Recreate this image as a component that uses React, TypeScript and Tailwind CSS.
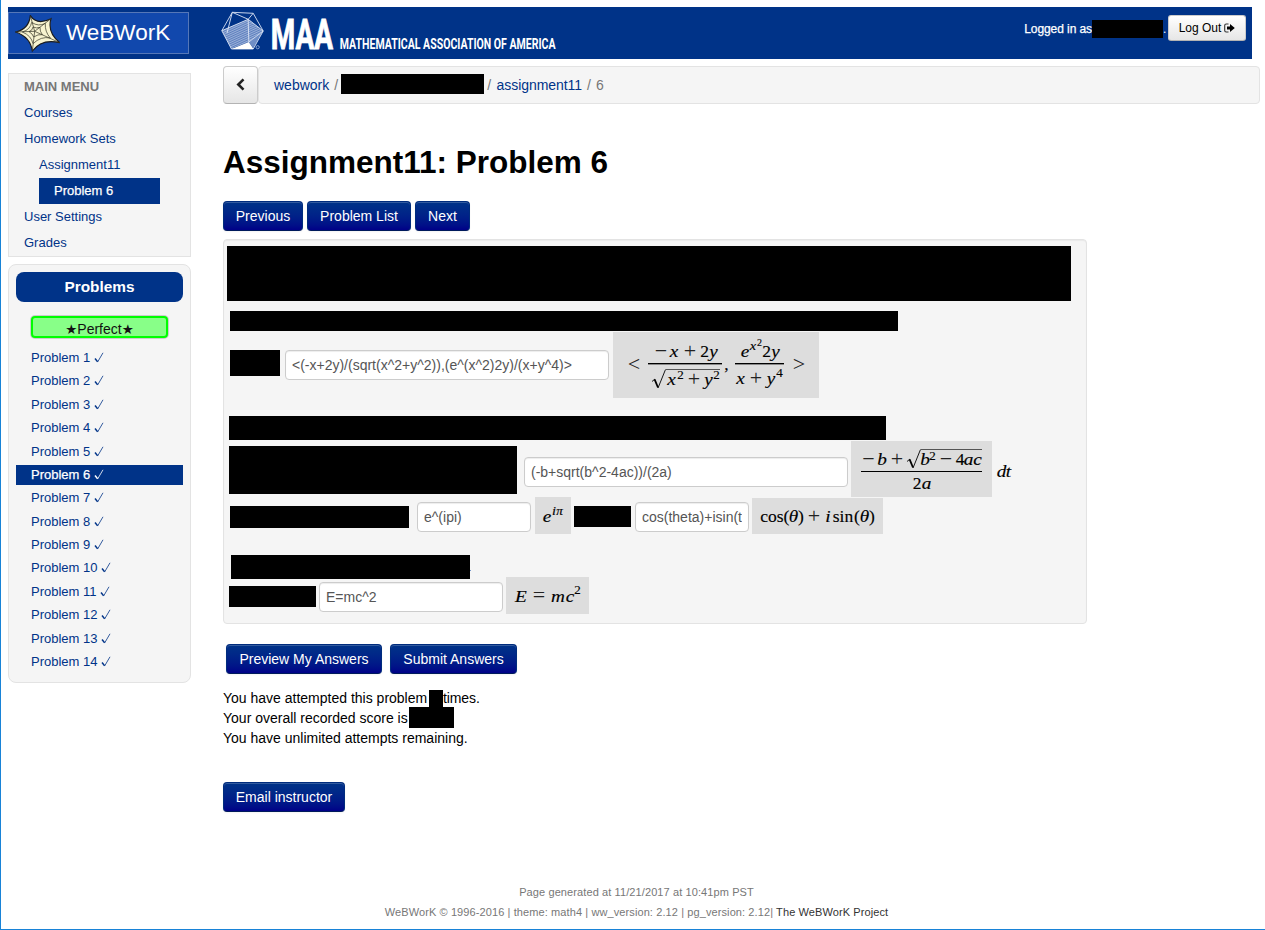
import React from "react";

const navButton =
  "flex h-[30px] items-center justify-center rounded-[4px] border border-[#002c7d] border-b-[#001a5c] bg-linear-to-b from-[#003388] to-[#000088] text-[14px] text-white shadow-[inset_0_1px_0_rgba(255,255,255,0.2),0_1px_2px_rgba(0,0,0,0.05)]";

const inputBox =
  "h-[30px] shrink-0 rounded-[4px] border border-[#cccccc] bg-white px-[6px] text-[14px] text-[#555555] shadow-[inset_0_1px_1px_rgba(0,0,0,0.075)] outline-none";

function Redacted({ className }: { className: string }) {
  return <span className={`block shrink-0 bg-black ${className}`} />;
}

/* One math token, centred in a box of its own width. */
function T({ c, className = "" }: { c: string; className?: string }) {
  return (
    <span className={`flex h-[20px] shrink-0 justify-center whitespace-nowrap [-webkit-text-stroke:0.15px_black] ${className}`}>{c}</span>
  );
}

/* Italic variable, slightly widened. */
function V({ c, className = "" }: { c: string; className?: string }) {
  return (
    <span className={`flex h-[20px] shrink-0 scale-x-110 justify-center italic [-webkit-text-stroke:0.15px_black] ${className}`}>{c}</span>
  );
}

/* Large, thin operator. */
function Op({ c, className = "" }: { c: string; className?: string }) {
  return <span className={`flex h-[20px] shrink-0 justify-center text-[22px] text-[#222222] ${className}`}>{c}</span>;
}

function Math({ className, children }: { className: string; children: React.ReactNode }) {
  return (
    <div className={`flex shrink-0 items-start bg-[#dddddd] font-['Liberation_Serif',serif] text-[17.5px] leading-[20px] text-black ${className}`}>
      {children}
    </div>
  );
}

function Radical() {
  return (
    <svg width="15" height="20" viewBox="0 0 15 20" className="block shrink-0" fill="none" stroke="#000">
      <path d="M1 12.5L4 10" strokeWidth="0.9" />
      <path d="M3.6 10.3L7 18.5" strokeWidth="1.8" />
      <path d="M7 19L14.5 0.5" strokeWidth="0.9" />
    </svg>
  );
}

function WebLogo() {
  return (
    <svg width="46" height="38" viewBox="46 46 138 114" className="block">
      <path
        d="M92 48Q112 78 154 57Q142 98 180 129Q126 116 98 154Q92 112 48 97Q88 88 92 48Z"
        fill="#f8f4d0"
        stroke="#1c1c1c"
        strokeWidth="3.5"
      />
      <g fill="none" stroke="#3c3c2c" strokeWidth="2.2">
        <path d="M92 48L105 95L154 57M105 95L180 129M105 95L98 154M105 95L48 97" />
        <path d="M96 68Q116 82 137 71Q135 96 152 115Q124 109 100 132Q95 108 68 97Q92 90 96 68Z" />
        <path d="M100 82Q111 87 121 83Q120 95 128 105Q115 103 102 112Q99 102 88 96Q99 92 100 82Z" />
      </g>
    </svg>
  );
}

function MaaLogo() {
  return (
    <svg width="344" height="52" viewBox="0 -4 344 52" className="block">
      <defs>
        <pattern id="hatch" width="2" height="2" patternUnits="userSpaceOnUse" patternTransform="rotate(-25)">
          <rect width="2" height="2" fill="#5d7fbd" />
          <rect width="2" height="0.8" fill="#a9bce0" />
        </pattern>
      </defs>
      <path d="M0.8 19.7L27.2 8.3L42.2 20L27.8 31L10.2 37.7Z" fill="url(#hatch)" />
      <path d="M27.8 31L42.2 20L32.2 37Z" fill="#6f8ec6" />
      <g fill="none" stroke="#dbe4f5" strokeWidth="0.9">
        <path d="M11.3 1.3L32.2 2.3L42.2 20L32.2 38H10.5L0.8 19.7Z" />
        <path d="M11.3 1.3L27.2 8.3L32.2 2.3M27.2 8.3L42.2 20L27.8 31L27.2 8.3L0.8 19.7M11.3 1.3L6 22" />
      </g>
      <path d="M27.8 31L32.5 38H10.5Z" fill="#fff" />
      <circle cx="36.7" cy="36.2" r="1.6" fill="none" stroke="#b5c6e6" strokeWidth="0.7" />
      <g fill="#fff" fontFamily="Roboto, sans-serif" fontWeight="700">
        <text transform="translate(49.8 38) scale(0.655 1)" fontSize="42.5" stroke="#fff" strokeWidth="0.9" textLength="95" lengthAdjust="spacingAndGlyphs">MAA</text>
        <text transform="translate(118.8 38) scale(0.719 1)" fontSize="13.8" textLength="300" lengthAdjust="spacingAndGlyphs">MATHEMATICAL ASSOCIATION OF AMERICA</text>
      </g>
    </svg>
  );
}

function Header() {
  return (
    <header className="ml-[7px] flex h-[52px] w-[1244px] items-start bg-[#003388]">
      <div className="mt-[5px] flex h-[42px] w-[181px] items-start border border-[#5577b8] bg-[#1148ad]">
        <div className="mt-[2px] ml-[6px] w-[46px]">
          <WebLogo />
        </div>
        <span className="mt-[7px] ml-[5px] text-[22.5px] leading-[26px] text-white">WeBWorK</span>
      </div>
      <div className="ml-[32px]">
        <MaaLogo />
      </div>
      <div className="mt-[8px] mr-[6px] ml-auto flex items-start">
        <span className="mt-[4px] text-[12px] leading-[20px] tracking-[-0.08px] text-white [-webkit-text-stroke:0.25px_white]">Logged in as</span>
        <Redacted className="mt-[5px] h-[18px] w-[71px]" />
        <span className="mt-[4px] w-[5px] text-[12px] leading-[20px] text-white">.</span>
        <button className="flex h-[26px] w-[78px] items-center justify-center gap-[3px] rounded-[3px] border border-[#cccccc] border-b-[#b3b3b3] bg-linear-to-b from-white to-[#e6e6e6] text-[12px] text-black">
          Log Out
          <svg width="11" height="10" viewBox="0 0 11 10" className="block">
            <path d="M4.5 1H2.2Q0.7 1 0.7 2.5V7.5Q0.7 9 2.2 9H4.5" fill="none" stroke="#333" strokeWidth="1.1" />
            <path d="M3 3.4H6V0.9L10.8 5L6 9.1V6.6H3Z" fill="#000" />
          </svg>
        </button>
      </div>
    </header>
  );
}

const numbers = [1, 2, 3, 4, 5, 6, 7, 8, 9, 10, 11, 12, 13, 14];

function Sidebar() {
  return (
    <aside className="w-[183px] shrink-0 pt-[14px] text-[13px] text-[#003388]">
      <nav className="border border-[#e3e3e3] bg-[#f5f5f5] leading-[25px]">
        <div className="h-[26px] pl-[15px] font-bold text-[#777777]">MAIN MENU</div>
        <div className="h-[26px] pl-[15px]">Courses</div>
        <div className="h-[26px] pl-[15px]">Homework Sets</div>
        <div className="h-[26px] pl-[30px]">Assignment11</div>
        <div className="ml-[30px] h-[26px] w-[121px] bg-[#003388] pl-[15px] text-white [-webkit-text-stroke:0.25px_white]">Problem 6</div>
        <div className="h-[26px] pl-[15px]">User Settings</div>
        <div className="h-[26px] pl-[15px]">Grades</div>
      </nav>
      <section className="mt-[7px] h-[419px] rounded-[8px] border border-[#e3e3e3] bg-[#f5f5f5] px-[7px] pt-[7px]">
        <h2 className="h-[30px] rounded-[8px] bg-[#003388] text-center text-[15.4px] leading-[30px] font-bold text-white">Problems</h2>
        <div className="mx-[15px] mt-[14px] flex h-[22px] items-center justify-center rounded-[4px] border-2 border-[#00ff00] bg-[#88ff88] pt-[3px] text-[14px] text-[#111111] shadow-[0_0_0_1px_rgba(130,130,130,0.35)]">
          <span className="font-['DejaVu_Sans',sans-serif] text-[13.5px]">★</span>Perfect<span className="font-['DejaVu_Sans',sans-serif] text-[13.5px]">★</span>
        </div>
        <ul className="mt-[10px]">
          {numbers.map((n) => (
            <li
              key={n}
              className={
                n === 6
                  ? "mb-[3.38px] h-[20px] bg-[#003388] pl-[15px] leading-[19px] text-white [-webkit-text-stroke:0.25px_white]"
                  : "mb-[3.38px] h-[20px] pl-[15px] leading-[19px]"
              }
            >
              Problem {n}
              <svg width="10" height="11" viewBox="0 0 10 11" className="ml-[3.5px] inline-block align-[-1px]" fill="none" stroke="currentColor">
                <path d="M1 6.5L3.6 9.8" strokeWidth="1.4" />
                <path d="M3.6 10L9 0.8" strokeWidth="0.8" />
              </svg>
            </li>
          ))}
        </ul>
      </section>
    </aside>
  );
}

function VectorFormula() {
  return (
    <Math className="ml-[4px] h-[66px] w-[206px]">
      <Op c="<" className="mt-[22px] ml-[12px] w-[18px]" />
      <div className="mt-[9px] ml-[5px] w-[74px]">
        <div className="flex h-[22px] pl-[6px]">
          <Op c="−" className="w-[14px]" />
          <V c="x" className="w-[12px]" />
          <Op c="+" className="w-[20px]" />
          <T c="2" className="w-[9px]" />
          <V c="y" className="w-[9px]" />
        </div>
        <div className="h-[2px] border-t border-black bg-[#888888]" />
        <div className="flex pt-[4px] pl-[3px]">
          <Radical />
          <div className="flex h-[20px] w-[54px] border-t border-[#555555]">
            <V c="x" className="mt-[-1px] w-[11px]" />
            <T c="2" className="mt-[-5px] w-[7px] text-[13px]" />
            <Op c="+" className="mt-[-1px] w-[20px]" />
            <V c="y" className="mt-[-1px] w-[9px]" />
            <T c="2" className="mt-[-5px] w-[7px] text-[13px]" />
          </div>
        </div>
      </div>
      <T c="," className="mt-[22px] ml-[2px] w-[5px]" />
      <div className="mt-[9px] ml-[6px] w-[49px]">
        <div className="flex h-[22px] pl-[6px]">
          <V c="e" className="w-[8px]" />
          <V c="x" className="mt-[-5px] w-[8px] text-[13px]" />
          <T c="2" className="mt-[-8px] w-[5px] text-[10px]" />
          <T c="2" className="w-[9px]" />
          <V c="y" className="w-[9px]" />
        </div>
        <div className="h-[2px] border-t border-black bg-[#888888]" />
        <div className="flex pt-[3px]">
          <V c="x" className="w-[11px]" />
          <Op c="+" className="w-[20px]" />
          <V c="y" className="w-[10px]" />
          <T c="4" className="mt-[-5px] w-[7px] text-[13px]" />
        </div>
      </div>
      <Op c=">" className="mt-[22px] ml-[6px] w-[18px]" />
    </Math>
  );
}

function QuadraticFormula() {
  return (
    <Math className="ml-[3px] h-[56px] w-[141px] pl-[10px]">
      <div className="mt-[8px] w-[121px]">
        <div className="flex h-[22px]">
          <Op c="−" className="w-[15px]" />
          <V c="b" className="w-[12px]" />
          <Op c="+" className="w-[18px]" />
          <div className="flex">
            <Radical />
            <div className="flex h-[20px] w-[61px] border-t border-[#555555]">
              <V c="b" className="mt-[-1px] w-[8px]" />
              <T c="2" className="mt-[-4px] w-[7px] text-[13px]" />
              <Op c="−" className="mt-[-1px] w-[20px]" />
              <T c="4" className="mt-[-1px] w-[8px]" />
              <V c="a" className="mt-[-1px] w-[9px]" />
              <V c="c" className="mt-[-1px] w-[9px]" />
            </div>
          </div>
        </div>
        <div className="h-[1px] bg-black" />
        <div className="flex justify-center pt-[1px]">
          <T c="2" className="w-[9px]" />
          <V c="a" className="w-[9px]" />
        </div>
      </div>
    </Math>
  );
}

function ProblemBody() {
  return (
    <section className="mt-[8px] h-[385px] w-[864px] rounded-[4px] border border-[#e3e3e3] bg-[#f5f5f5] shadow-[inset_0_1px_1px_rgba(0,0,0,0.05)]">
      <Redacted className="mt-[6px] ml-[3px] h-[55px] w-[844px]" />
      <Redacted className="mt-[10px] ml-[6px] h-[20px] w-[668px]" />
      <div className="mt-[1px] flex h-[66px] items-start pl-[6px]">
        <Redacted className="mt-[18px] h-[26px] w-[50px]" />
        <input className={`mt-[18px] ml-[5px] w-[324px] ${inputBox}`} defaultValue="<(-x+2y)/(sqrt(x^2+y^2)),(e^(x^2)2y)/(x+y^4)>" />
        <VectorFormula />
      </div>
      <Redacted className="mt-[18px] ml-[5px] h-[24px] w-[657px]" />
      <div className="mt-[1px] flex h-[56px] items-start pl-[5px]">
        <Redacted className="mt-[5px] h-[48px] w-[288px]" />
        <input className={`mt-[16px] ml-[7px] w-[324px] ${inputBox}`} defaultValue="(-b+sqrt(b^2-4ac))/(2a)" />
        <QuadraticFormula />
        <div className="mt-[20px] ml-[5px] flex font-['Liberation_Serif',serif] text-[17.5px] leading-[20px] text-black">
          <V c="d" className="w-[9px]" />
          <V c="t" className="w-[5px]" />
        </div>
      </div>
      <div className="flex h-[37px] items-start pl-[6px]">
        <Redacted className="mt-[9px] h-[22px] w-[179px]" />
        <input className={`mt-[5px] ml-[8px] w-[114px] ${inputBox}`} defaultValue="e^(ipi)" />
        <Math className="ml-[4px] h-[37px] w-[36px] pt-[9px] pl-[8px]">
          <V c="e" className="w-[8px]" />
          <V c="i" className="mt-[-5px] ml-[1px] w-[4px] text-[13px]" />
          <V c="π" className="mt-[-5px] w-[7px] text-[12px]" />
        </Math>
        <Redacted className="mt-[9px] ml-[3px] h-[21px] w-[57px]" />
        <input className={`mt-[5px] ml-[4px] w-[114px] ${inputBox}`} defaultValue="cos(theta)+isin(theta)" />
        <Math className="mt-[1px] ml-[3px] h-[36px] w-[131px] pt-[8px] pl-[8px]">
          <T c="cos" className="w-[24px]" />
          <T c="(" className="w-[5px]" />
          <V c="θ" className="w-[9px]" />
          <T c=")" className="w-[6px]" />
          <Op c="+" className="w-[20px]" />
          <V c="i" className="w-[8px]" />
          <T c="sin" className="w-[22px]" />
          <T c="(" className="w-[6px]" />
          <V c="θ" className="w-[9px]" />
          <T c=")" className="w-[6px]" />
        </Math>
      </div>
      <div className="mt-[21px] flex h-[22px] items-start pl-[7px]">
        <Redacted className="h-[24px] w-[239px]" />
        <span className="mt-[15px] block h-[1px] w-[1px] bg-[#7799cc]" />
      </div>
      <div className="flex h-[37px] items-start pl-[5px]">
        <Redacted className="mt-[9px] h-[21px] w-[87px]" />
        <input className={`mt-[5px] ml-[3px] w-[184px] ${inputBox}`} defaultValue="E=mc^2" />
        <Math className="ml-[3px] h-[37px] w-[83px] pt-[9px] pl-[8px]">
          <V c="E" className="w-[14px]" />
          <Op c="=" className="mt-[-1px] w-[22px]" />
          <V c="m" className="w-[16px]" />
          <V c="c" className="w-[8px]" />
          <T c="2" className="mt-[-6px] w-[7px] text-[13px]" />
        </Math>
      </div>
    </section>
  );
}

export default function App() {
  return (
    <div className="flex h-[930px] w-[1265px] flex-col overflow-hidden border-b border-l border-[#1883d7] bg-white pt-[7px] font-['Liberation_Sans',Arial,sans-serif] text-[14px] leading-[20px] text-black">
      <Header />
      <div className="flex items-start pl-[7px]">
        <Sidebar />
        <main className="ml-[32px] w-[1037px] pt-[7px]">
          <div className="flex h-[38px]">
            <button className="flex w-[35px] items-center justify-center rounded-[4px] border border-[#cccccc] border-b-[#b3b3b3] bg-linear-to-b from-white to-[#e6e6e6]">
              <svg width="9" height="13" viewBox="0 0 9 13" className="mb-[1px] block" fill="none" stroke="#222" strokeWidth="2.6">
                <path d="M7.5 1.3L2.3 6.5L7.5 11.7" />
              </svg>
            </button>
            <div className="flex flex-1 items-center rounded-[4px] border border-[#e3e3e3] bg-[#f5f5f5] pl-[15px] text-[#777777]">
              <span className="text-[#003388]">webwork</span>
              <span className="ml-[5px]">/</span>
              <Redacted className="mb-[3px] ml-[3px] h-[20px] w-[143px]" />
              <span className="ml-[3px]">/</span>
              <span className="ml-[5.5px] tracking-[-0.05px] text-[#003388]">assignment11</span>
              <span className="ml-[5px]">/</span>
              <span className="ml-[5px]">6</span>
            </div>
          </div>
          <h1 className="mt-[38px] h-[40px] text-[31.5px] leading-[40px] font-bold">Assignment11: Problem 6</h1>
          <div className="mt-[19px] flex gap-[4px]">
            <button className={`w-[80px] ${navButton}`}>Previous</button>
            <button className={`w-[104px] ${navButton}`}>Problem List</button>
            <button className={`w-[55px] ${navButton}`}>Next</button>
          </div>
          <ProblemBody />
          <div className="mt-[20px] flex gap-[8px] pl-[3px]">
            <button className={`w-[156px] ${navButton}`}>Preview My Answers</button>
            <button className={`w-[127px] ${navButton}`}>Submit Answers</button>
          </div>
          <div className="mt-[14px]">
            <div className="flex h-[20px] items-start">
              <span className="w-[206px] whitespace-nowrap">You have attempted this problem</span>
              <Redacted className="mt-[2px] h-[17px] w-[14px]" />
              <span className="tracking-[-0.1px]">times.</span>
            </div>
            <div className="flex h-[20px] items-start">
              <span className="w-[186px] whitespace-nowrap">Your overall recorded score is</span>
              <Redacted className="mt-[-1px] h-[21px] w-[45px]" />
            </div>
            <div>You have unlimited attempts remaining.</div>
          </div>
          <button className={`mt-[34px] w-[122px] ${navButton}`}>Email instructor</button>
        </main>
      </div>
      <footer className="mt-[70px] pl-[7px] text-center text-[11px] leading-[20px] tracking-[0.1px] text-[#777777]">
        <div>Page generated at 11/21/2017 at 10:41pm PST</div>
        <div>
          WeBWorK © 1996-2016 | theme: math4 | ww_version: 2.12 | pg_version: 2.12| <span className="text-[#333333]">The WeBWorK Project</span>
        </div>
      </footer>
    </div>
  );
}
